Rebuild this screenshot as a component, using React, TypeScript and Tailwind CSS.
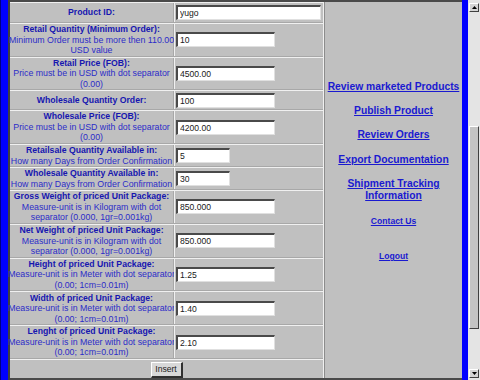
import React from "react";

type Row = {
  title: string;
  notes: string[];
  value: string;
  width: string;
  height: string;
};

const meter = ["Measure-unit is in Meter with dot separator", "(0.00; 1cm=0.01m)"];
const kilo = ["Measure-unit is in Kilogram with dot", "separator (0.000, 1gr=0.001kg)"];
const usd = ["Price must be in USD with dot separator", "(0.00)"];
const days = ["How many Days from Order Confirmation"];

const rows: Row[] = [
  { title: "Product ID:", notes: [], value: "yugo", width: "w-[145px]", height: "h-[21px]" },
  {
    title: "Retail Quantity (Minimum Order):",
    notes: ["Minimum Order must be more then 110.00", "USD value"],
    value: "10",
    width: "w-[99px]",
    height: "h-[34px]",
  },
  { title: "Retail Price (FOB):", notes: usd, value: "4500.00", width: "w-[99px]", height: "h-[34px]" },
  { title: "Wholesale Quantity Order:", notes: [], value: "100", width: "w-[99px]", height: "h-[20px]" },
  { title: "Wholesale Price (FOB):", notes: usd, value: "4200.00", width: "w-[99px]", height: "h-[34px]" },
  { title: "Retailsale Quantity Available in:", notes: days, value: "5", width: "w-[54px]", height: "h-[23px]" },
  { title: "Wholesale Quantity Available in:", notes: days, value: "30", width: "w-[54px]", height: "h-[23px]" },
  { title: "Gross Weight of priced Unit Package:", notes: kilo, value: "850.000", width: "w-[99px]", height: "h-[34px]" },
  { title: "Net Weight of priced Unit Package:", notes: kilo, value: "850.000", width: "w-[99px]", height: "h-[34px]" },
  { title: "Height of priced Unit Package:", notes: meter, value: "1.25", width: "w-[99px]", height: "h-[34px]" },
  { title: "Width of priced Unit Package:", notes: meter, value: "1.40", width: "w-[99px]", height: "h-[34px]" },
  { title: "Lenght of priced Unit Package:", notes: meter, value: "2.10", width: "w-[99px]", height: "h-[34px]" },
];

function FormRow({ row }: { row: Row }) {
  return (
    <div className={`flex ${row.height} border-t border-t-[#f0f0f0] border-b border-b-[#a8a8a8]`}>
      <div className="w-[164px] shrink-0 flex flex-col justify-center items-center text-center border-r border-r-[#a8a8a8] leading-[10.5px] whitespace-nowrap">
        <span className="font-bold text-[8.7px] text-[#1616b0]">{row.title}</span>
        {row.notes.map((n) => (
          <span key={n} className="text-[8.8px] text-[#2c2cc8]">
            {n}
          </span>
        ))}
      </div>
      <div className="flex-1 flex items-center pl-[1px] border-l border-l-[#f0f0f0]">
        <input
          readOnly
          value={row.value}
          className={`${row.width} h-[15px] bg-white text-[8.6px] text-[#202020] pl-[2px] outline-none border-t-2 border-l-2 border-t-[#4a4a4a] border-l-[#4a4a4a] border-b border-r border-b-[#e0e0e0] border-r-[#e0e0e0]`}
        />
      </div>
    </div>
  );
}

function SideLink({ children, className = "" }: { children: React.ReactNode; className?: string }) {
  return (
    <a href="#" className={`font-bold underline text-[#1a1ad0] text-center ${className}`}>
      {children}
    </a>
  );
}

export default function App() {
  return (
    <div className="w-[480px] h-[380px] overflow-hidden flex bg-[#c0c0c0] font-['Liberation_Sans',Arial,sans-serif]">
      {/* left frame bar */}
      <div className="w-[10px] shrink-0 bg-[#0000ff] border-l border-l-[#000080] border-r-2 border-r-[#404040]" />

      {/* content frame */}
      <div className="flex flex-1 border-t-2 border-t-[#4a4a4a] border-b-2 border-b-[#4a4a4a]">
        <div className="w-[313px] shrink-0 flex flex-col">
          {rows.map((r) => (
            <FormRow key={r.title} row={r} />
          ))}
          <div className="flex-1 flex justify-center items-start pt-[2px] border-t border-t-[#f0f0f0]">
            <button className="w-[32px] h-[16px] bg-[#d8d8d8] text-[8.6px] text-[#202020] border-t border-l border-t-white border-l-white border-r-2 border-b-2 border-r-[#303030] border-b-[#303030]">
              Insert
            </button>
          </div>
        </div>

        {/* double divider */}
        <div className="w-[2px] shrink-0 border-l border-l-[#f0f0f0] border-r border-r-[#8c8c8c]" />

        {/* right menu */}
        <div className="w-[137px] shrink-0 flex flex-col items-center pt-[79px] text-[10.3px] leading-[12px]">
          <SideLink>Review marketed Products</SideLink>
          <SideLink className="mt-[12px]">Publish Product</SideLink>
          <SideLink className="mt-[12px]">Review Orders</SideLink>
          <SideLink className="mt-[13px]">Export Documentation</SideLink>
          <SideLink className="mt-[12px]">
            Shipment Tracking
            <br />
            Information
          </SideLink>
          <SideLink className="mt-[14px] text-[8.6px] leading-[10px]">Contact Us</SideLink>
          <SideLink className="mt-[25px] text-[8.6px] leading-[10px]">Logout</SideLink>
        </div>
      </div>

      {/* right frame bar */}
      <div className="w-[6px] shrink-0 bg-[#0000ff]" />

      {/* scrollbar */}
      <div className="w-[12px] shrink-0 flex flex-col bg-[#e4e4e4] pl-[1px] pt-[3px] pb-[2px]">
        <div className="w-[10px] h-[9px] flex items-center justify-center bg-[#d4d4d4] border-t border-l border-t-white border-l-white border-r border-b border-r-[#404040] border-b-[#404040]">
          <svg width="5" height="3" viewBox="0 0 5 3">
            <path d="M2.5 0 L5 3 L0 3 Z" fill="#000" />
          </svg>
        </div>
        <div className="h-[114px]" />
        <div className="w-[10px] h-[203px] bg-[#c4c4c4] border-t border-l border-t-white border-l-white border-r border-b border-r-[#404040] border-b-[#404040]" />
        <div className="flex-1" />
        <div className="w-[10px] h-[9px] flex items-center justify-center bg-[#d4d4d4] border-t border-l border-t-white border-l-white border-r border-b border-r-[#404040] border-b-[#404040]">
          <svg width="5" height="3" viewBox="0 0 5 3">
            <path d="M0 0 L5 0 L2.5 3 Z" fill="#000" />
          </svg>
        </div>
      </div>
    </div>
  );
}
